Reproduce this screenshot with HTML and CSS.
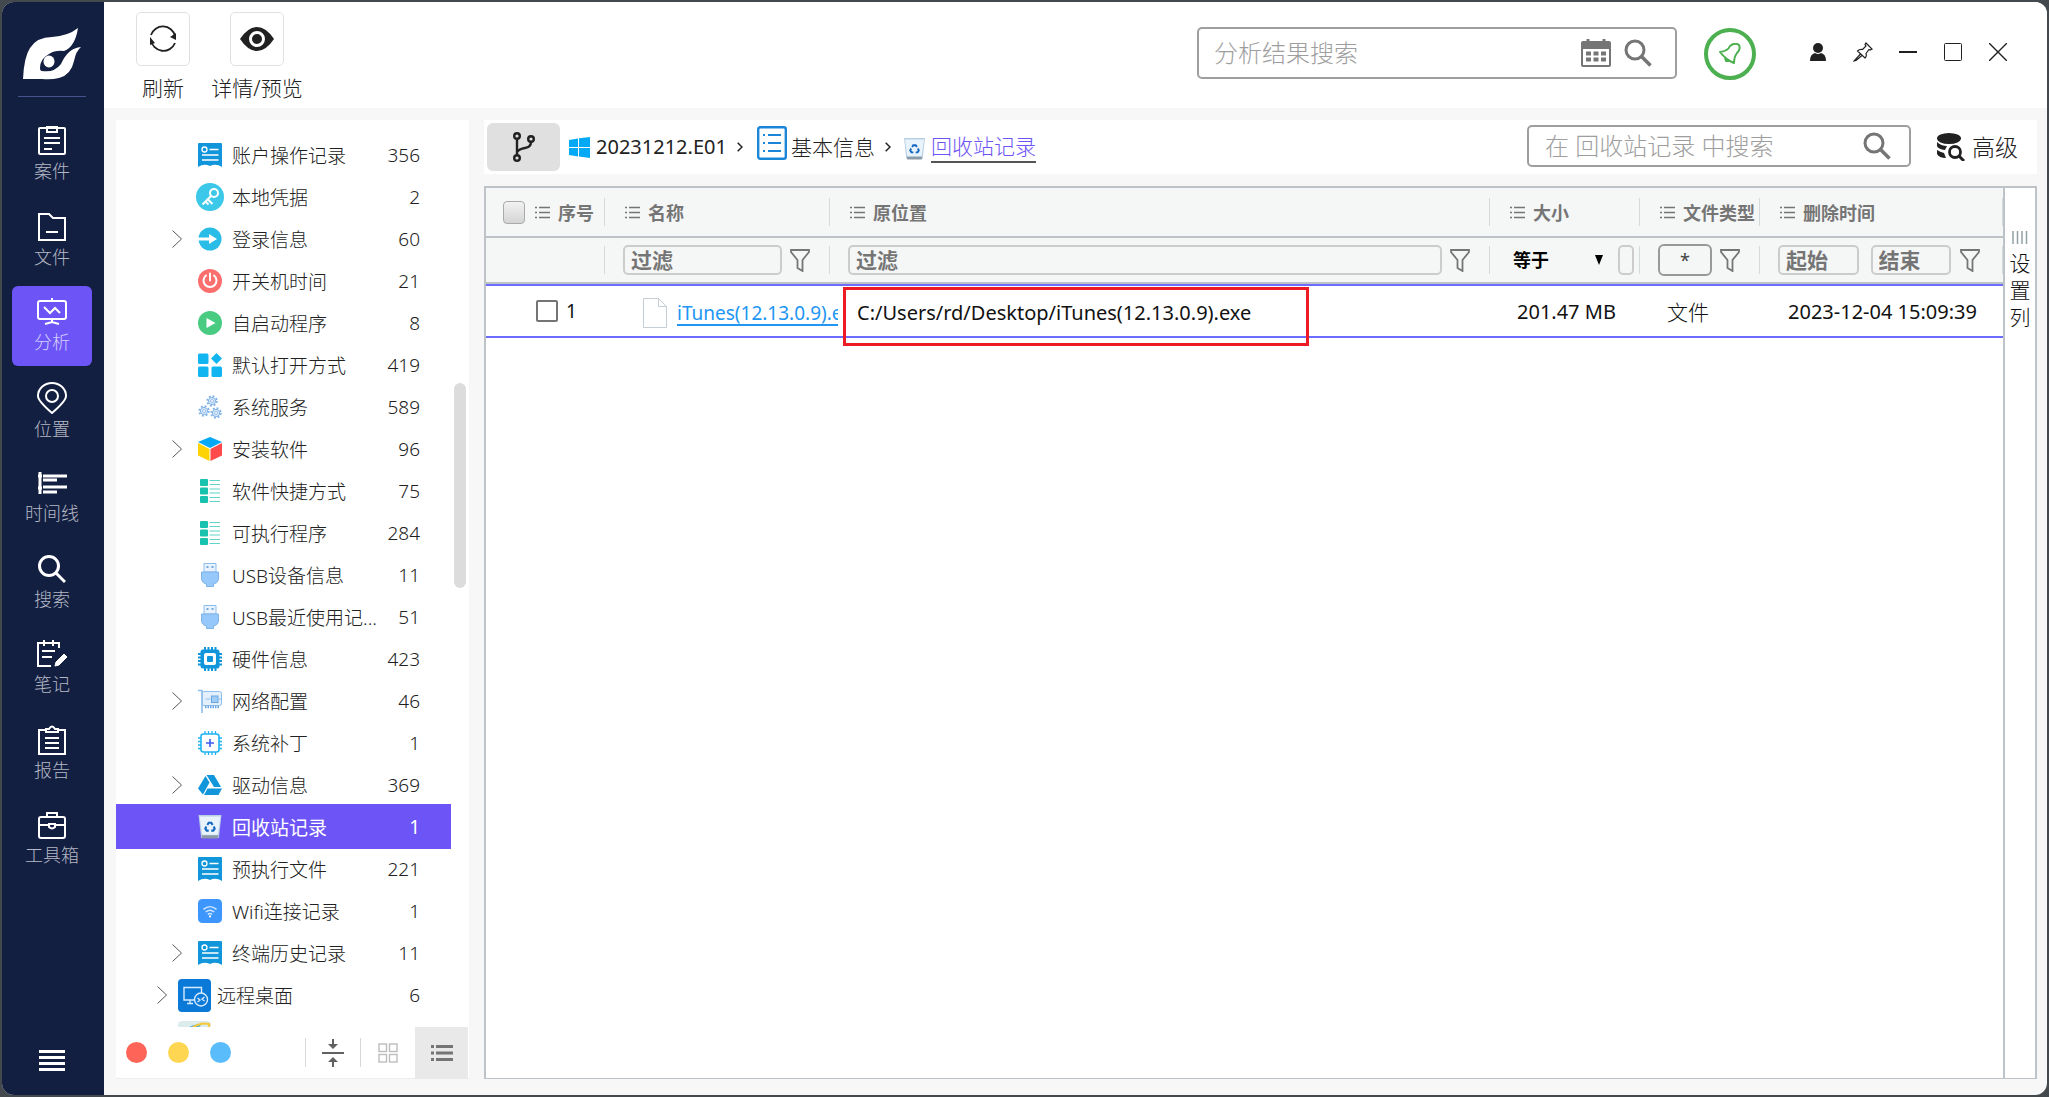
FILE: index.html
```html
<!DOCTYPE html>
<html lang="zh-CN">
<head>
<meta charset="utf-8">
<title>分析 - 回收站记录</title>
<link rel="stylesheet" href="styles.css">
</head>
<body>
<svg class="sprite" aria-hidden="true">
  <symbol id="doc" viewBox="0 0 24 24"><path fill="#1296db" d="M0 1q0-1 1-1h22q1 0 1 1v23q-6-4-12-1q-6-3-12 1z"/><circle cx="6.500" cy="6.500" r="2.500" fill="none" stroke="#fff" stroke-width="1.300"/><path stroke="#fff" stroke-width="1.300" d="M11.500 6.500h9M4 12h16.500M4 17h16.500" fill="none"/></symbol>
  <symbol id="key" viewBox="0 0 28 28"><circle cx="14" cy="14" r="14" fill="#3cc8e8"/><g fill="none" stroke="#fff" stroke-width="2"><circle cx="18" cy="10" r="4"/><path d="M15 13l-8.500 8.500M12 16.500l4.500 4.500M9.500 18.500l3 3"/></g></symbol>
  <symbol id="login" viewBox="0 0 24 24"><circle cx="12" cy="12" r="11.500" fill="#28bce6"/><path d="M0 10.500h11V7l8 5-8 5v-3.500H0z" fill="#fff"/></symbol>
  <symbol id="power" viewBox="0 0 24 24"><circle cx="12" cy="12" r="12" fill="#fa6e6e"/><path d="M12 4.500v7M8 6.500a6.500 6.500 0 1 0 8 0" fill="none" stroke="#fff" stroke-width="2" stroke-linecap="round"/></symbol>
  <symbol id="play" viewBox="0 0 24 24"><circle cx="12" cy="12" r="12" fill="#4acb82"/><path d="M8.500 7v10l9-5z" fill="#fff"/></symbol>
  <symbol id="apps" viewBox="0 0 24 24"><g fill="#13b5f1"><rect y=".5" width="10.500" height="10.500" rx="1.500"/><rect y="13.500" width="10.500" height="10.500" rx="1.500"/><rect x="13.500" y="13.500" width="10.500" height="10.500" rx="1.500"/><path d="M18.500 0l5.500 5.500-5.500 5.500-5.500-5.500z"/></g></symbol>
  <symbol id="gear" viewBox="-6 -6 12 12"><circle r="4.800" fill="none" stroke="#7fb2e8" stroke-width="1.800" stroke-dasharray="1.885 1.885"/><circle r="3.600" fill="#dcebfb" stroke="#7fb2e8"/><circle r="1.500" fill="#fff" stroke="#7fb2e8" stroke-width=".8"/></symbol>
  <symbol id="gears" viewBox="0 0 24 24"><use href="#gear" x="8" y="0" width="12" height="12"/><use href="#gear" x="0" y="10" width="12" height="12"/><use href="#gear" x="12" y="12" width="12" height="12"/></symbol>
  <symbol id="cube" viewBox="0 0 24 24"><path fill="#03a9f4" d="M12 0l12 5-12 6L0 5z"/><path fill="#fdd306" d="M0 6l11.500 6v12L0 18.500z"/><path fill="#ff4b4b" d="M24 6l-11.500 6v12L24 18.500z"/></symbol>
  <symbol id="rows" viewBox="0 0 20 24"><g fill="#17c3ae"><rect width="8" height="7" rx="1"/><rect y="8.500" width="8" height="7" rx="1"/><rect y="17" width="8" height="7" rx="1"/></g><path stroke="#5fd6c8" stroke-width="1.200" d="M9.500 1.500H20M9.500 5.500H20M9.500 10H20M9.500 14H20M9.500 18.500H20M9.500 22.500H20"/></symbol>
  <symbol id="usb" viewBox="0 0 18 24"><path d="M3 .5h12V9H3z" fill="#e8f3ff" stroke="#8dbdec"/><path d="M5.500 4h2M10.500 4h2" stroke="#4a90d9" stroke-width="1.500"/><path d="M.5 9h17v6q0 5-5 6v2.500h-7V21q-5-1-5-6z" fill="#97c8fb" stroke="#7fb2e8"/></symbol>
  <symbol id="chip" viewBox="0 0 24 24"><path stroke="#1296db" stroke-width="2" d="M7 0v24M10.500 0v24M14 0v24M17.500 0v24M0 7h24M0 10.500h24M0 14h24M0 17.500h24"/><rect x="2.500" y="2.500" width="19" height="19" rx="2.500" fill="#1296db"/><rect x="6" y="6" width="12" height="12" rx="2" fill="#fff"/><rect x="9" y="9" width="6" height="6" rx="1" fill="#1296db"/></symbol>
  <symbol id="nic" viewBox="0 0 24 24"><rect x="4" y="2.500" width="19.500" height="14" rx="2" fill="#e3f0fc" stroke="#8dbdec"/><path d="M0 1.500h4V24" fill="none" stroke="#8dbdec" stroke-width="1.600"/><rect x="13.500" y="7" width="6.500" height="6.500" fill="#9fcdf8" stroke="#6aa6e0"/><path d="M7.500 10h5M21 10h2" stroke="#8dbdec"/><path d="M7 18h14" stroke="#6aa6e0" stroke-width="2.500" stroke-dasharray="1.500 1"/></symbol>
  <symbol id="patch" viewBox="0 0 24 24"><path stroke="#1fb3f2" stroke-width="1.300" d="M7 0v24M10.500 0v24M14 0v24M17.500 0v24M0 7h24M0 10.500h24M0 14h24M0 17.500h24"/><rect x="3" y="3" width="18" height="18" rx="2.500" fill="#fff" stroke="#1fb3f2" stroke-width="1.600"/><path d="M12 8v8M8 12h8" stroke="#3a5cf0" stroke-width="1.600"/></symbol>
  <symbol id="drive" viewBox="0 0 24 24"><g fill="#1296db"><path d="M8.500 2h7.500l7 12h-7z"/><path d="M7.500 3l4 6.500L5 21.500l-5-6z"/><path d="M9.500 15.500H24l-3.500 6.500H6z"/></g></symbol>
  <symbol id="bin" viewBox="0 0 22 23"><path d="M0 0h22l-2.500 22h-17z" fill="#b9cfe2"/><path d="M1 1.500h20L18.500 19h-15z" fill="#e9f3fb"/><path d="M3 19.500h16l-.5 3h-15z" fill="#8b9aa6"/><g fill="none" stroke="#1568c0" stroke-width="2"><path d="M8.500 9.500l1.200-2h2.600l1.200 2M14.500 11l1 2-1.300 2h-2M7.500 11l-1 2 1.300 2h2"/></g></symbol>
  <symbol id="wifi" viewBox="0 0 22 22"><rect width="22" height="22" rx="4" fill="#3c96fc"/><g fill="none" stroke="#cfe6ff" stroke-width="1.300"><path d="M5 9.500q6-5 12 0M7 12q4-3.500 8 0M9 14.200q2-1.700 4 0"/></g><circle cx="11" cy="16" r="1" fill="#fff"/></symbol>
  <symbol id="rdp" viewBox="0 0 33 33"><rect width="33" height="33" rx="4" fill="#0b79d8"/><g fill="none" stroke="#d8ecff" stroke-width="1.400"><path d="M17 21H6V8.500h17.500V14M12 21v3.500M9 24.500h6"/><circle cx="23" cy="20.500" r="6.500" fill="#0b79d8"/><path d="M19.500 19l2.500 2-2.500 2M26.500 18l-2.500 2 2.500 2"/></g></symbol>
  <symbol id="ie" viewBox="0 0 33 33"><rect width="33" height="33" rx="4" fill="#dcebec"/><path d="M10 7q6-5 13-3l-3 3q-5-1-9 2z" fill="#45aee8"/><path d="M14 7q8-6 17-4q1 1-1 4" fill="none" stroke="#f8c838" stroke-width="2"/></symbol>
  <symbol id="chev" viewBox="0 0 10 18"><path d="M.5.500l9 8.500-9 8.500" fill="none" stroke="#555"/></symbol>
  <symbol id="list" viewBox="0 0 15 13"><path d="M0 1.500h2M0 6.500h2M0 11.500h2M4 1.500h11M4 6.500h11M4 11.500h11" stroke="#757575" stroke-width="1.500"/></symbol>
  <symbol id="funnel" viewBox="0 0 20 23"><path d="M1 1h18v2l-6.500 8v11l-5-3v-8L1 3z" fill="none" stroke="#757575" stroke-width="1.800"/></symbol>
  <symbol id="mag" viewBox="0 0 28 28"><circle cx="11" cy="11" r="9" fill="none" stroke="#757575" stroke-width="3"/><path d="M17.500 17.500l9 9" stroke="#757575" stroke-width="3.500"/></symbol>
</svg>
<div class="window">
  <nav class="side">
    <svg class="logo" viewBox="0 0 58 52"><path fill="#fff" d="M55 0q-3 19-14 23q-9-1-15 3q-9 5-9 14q0 3 2 3q12 2 19-7Q45 20 58 19q-5 4-7 14q-3 14-15 17q-8 2-17 1H0q1-22 7-31Q14 9 29 9Q45 8 55 0z"/><ellipse cx="26" cy="33.500" rx="5.500" ry="6" fill="#fff"/></svg>
    <div class="line"></div>
    <div class="menu">
      <button class="item"><svg width="28" height="30" viewBox="0 0 28 30"><rect x="1" y="2" width="26" height="26" rx="1"/><path d="M9 1v5h10V1zM6 12h16M6 17h16M6 23h8"/></svg>案件</button>
      <button class="item"><svg width="28" height="30" viewBox="0 0 28 30"><path d="M1 2h10l4 4h12v22H1zM8 20h12"/></svg>文件</button>
      <button class="item on"><svg width="30" height="30" viewBox="0 0 30 30"><rect x="1" y="4" width="28" height="18" rx="2"/><path d="M15 1v3M15 22v4M8 27l7-2 7 2M7 10l6 6 5-5 5 5"/></svg>分析</button>
      <button class="item"><svg width="30" height="32" viewBox="0 0 30 32"><path d="M15 31Q1 19 1 14a14 13 0 0 1 28 0q0 5-14 17z"/><circle cx="15" cy="14" r="6"/></svg>位置</button>
      <button class="item"><svg class="fat" width="30" height="30" viewBox="0 0 30 30"><path d="M3 4v22M1 8h4M1 20h4M6 8h24M6 12h14M6 19h24M6 24h14"/></svg>时间线</button>
      <button class="item"><svg class="fat" width="28" height="30" viewBox="0 0 28 30"><circle cx="11" cy="12" r="9.500"/><path d="M18 19l9 9"/></svg>搜索</button>
      <button class="item"><svg width="30" height="30" viewBox="0 0 30 30"><path d="M22 9V4H1v23h13M7 1v6M16 1v6M5 12h13M5 18h10"/><path d="M18 27l1-4 8-8 3 3-8 8z" fill="#fff" stroke-width="1"/></svg>笔记</button>
      <button class="item"><svg width="28" height="30" viewBox="0 0 28 30"><path d="M7 5H1v24h26V5h-6M8 7V4h3q3-5 6 0h3v3zM7 13h14M7 18h14M7 23h14"/></svg>报告</button>
      <button class="item"><svg width="28" height="30" viewBox="0 0 28 30"><rect x="1" y="7" width="26" height="21" rx="2"/><path d="M9 7V3h10v4M1 15h10M17 15h10M11 14v3q3 3 6 0v-3z"/></svg>工具箱</button>
    </div>
    <button class="burger" aria-label="菜单"><svg width="26" height="21" viewBox="0 0 26 21"><path d="M0 1.500h26M0 7.500h26M0 13.500h26M0 19.500h26" stroke="#fff" stroke-width="3"/></svg></button>
  </nav>

  <div class="main">
    <header class="top">
      <div class="tools">
        <button class="tool"><span class="box"><svg width="28" height="28" viewBox="0 0 28 28"><g fill="none" stroke="#212121" stroke-width="1.800"><path d="M2 10A12.500 12.500 0 0 1 26 11M26 18A12.500 12.500 0 0 1 2 15"/></g><path d="M27 8v7l-6-3zM1 12l5 6-5 2z" fill="#212121"/></svg></span>刷新</button>
        <button class="tool"><span class="box"><svg width="34" height="24" viewBox="0 0 34 24"><path d="M0 12Q8 0 17 0t17 12Q26 24 17 24T0 12z" fill="#212121"/><circle cx="17" cy="12" r="6.500" fill="#212121" stroke="#fff" stroke-width="3"/></svg></span>详情/预览</button>
      </div>
      <label class="find find-all"><input type="text" placeholder="分析结果搜索" aria-label="分析结果搜索">
        <svg width="30" height="28" viewBox="0 0 30 28"><path d="M2 2h26q2 0 2 2v22q0 2-2 2H2q-2 0-2-2V4q0-2 2-2zm0 8v16h26V10z" fill="#757575" fill-rule="evenodd"/><path d="M7 0v3M23 0v3" stroke="#757575" stroke-width="3"/><path d="M5 14.500h20M5 20.500h20" stroke="#757575" stroke-width="4" stroke-dasharray="5 2.500"/></svg>
        <svg width="28" height="28"><use href="#mag"/></svg></label>
      <button class="bell" aria-label="通知"><svg width="22" height="22" viewBox="0 0 22 22"><path d="M1 9q8-1 10-6q5-4 9-1q2 4-2 8q-3 4-3 10q-5-2-7-4q-4-3-7-7zM6 15l1 3 3 0" fill="none" stroke="#4caf50" stroke-width="2" stroke-linejoin="round"/></svg></button>
      <div class="winbtns">
        <button aria-label="用户"><svg width="18" height="18" viewBox="0 0 18 18"><circle cx="9" cy="5" r="5" fill="#212121"/><path d="M1 18q0-7 5-8q3 2 6 0q5 1 5 8z" fill="#212121"/></svg></button>
        <button aria-label="固定"><svg width="20" height="20" viewBox="0 0 20 20"><path d="M13 1l6 6-2 1-1-.5-3 4q1 3-1 4.500L4.500 9q2-2 5-1.500L13 4l-1-1.500zM7.500 12L1 19l2-.5 6-5" fill="none" stroke="#212121" stroke-width="1.200"/></svg></button>
        <button aria-label="最小化"><svg width="18" height="18" viewBox="0 0 18 18"><path d="M0 9h18" stroke="#212121" stroke-width="2"/></svg></button>
        <button aria-label="最大化"><svg width="18" height="18" viewBox="0 0 18 18"><rect x=".5" y=".5" width="17" height="17" rx="1" fill="none" stroke="#212121"/></svg></button>
        <button aria-label="关闭"><svg width="18" height="18" viewBox="0 0 18 18"><path d="M0 0l18 18M18 0L0 18" stroke="#212121" stroke-width="1.400"/></svg></button>
      </div>
    </header>

    <div class="work">
      <aside class="panel">
        <ul class="tree">
          <li><i></i><svg><use href="#doc"/></svg><span>账户操作记录</span><b>356</b></li>
          <li><i></i><svg class="big"><use href="#key"/></svg><span>本地凭据</span><b>2</b></li>
          <li><i><svg><use href="#chev"/></svg></i><svg><use href="#login"/></svg><span>登录信息</span><b>60</b></li>
          <li><i></i><svg><use href="#power"/></svg><span>开关机时间</span><b>21</b></li>
          <li><i></i><svg><use href="#play"/></svg><span>自启动程序</span><b>8</b></li>
          <li><i></i><svg><use href="#apps"/></svg><span>默认打开方式</span><b>419</b></li>
          <li><i></i><svg><use href="#gears"/></svg><span>系统服务</span><b>589</b></li>
          <li><i><svg><use href="#chev"/></svg></i><svg><use href="#cube"/></svg><span>安装软件</span><b>96</b></li>
          <li><i></i><svg><use href="#rows"/></svg><span>软件快捷方式</span><b>75</b></li>
          <li><i></i><svg><use href="#rows"/></svg><span>可执行程序</span><b>284</b></li>
          <li><i></i><svg><use href="#usb"/></svg><span>USB设备信息</span><b>11</b></li>
          <li><i></i><svg><use href="#usb"/></svg><span>USB最近使用记...</span><b>51</b></li>
          <li><i></i><svg><use href="#chip"/></svg><span>硬件信息</span><b>423</b></li>
          <li><i><svg><use href="#chev"/></svg></i><svg><use href="#nic"/></svg><span>网络配置</span><b>46</b></li>
          <li><i></i><svg><use href="#patch"/></svg><span>系统补丁</span><b>1</b></li>
          <li><i><svg><use href="#chev"/></svg></i><svg><use href="#drive"/></svg><span>驱动信息</span><b>369</b></li>
          <li class="sel"><i></i><svg><use href="#bin"/></svg><span>回收站记录</span><b>1</b></li>
          <li><i></i><svg><use href="#doc"/></svg><span>预执行文件</span><b>221</b></li>
          <li><i></i><svg><use href="#wifi"/></svg><span>Wifi连接记录</span><b>1</b></li>
          <li><i><svg><use href="#chev"/></svg></i><svg><use href="#doc"/></svg><span>终端历史记录</span><b>11</b></li>
          <li class="app"><i><svg><use href="#chev"/></svg></i><svg><use href="#rdp"/></svg><span>远程桌面</span><b>6</b></li>
          <li class="app"><i></i><svg><use href="#ie"/></svg></li>
        </ul>
        <div class="thumb"></div>
        <footer class="foot">
          <span class="dot red"></span><span class="dot yellow"></span><span class="dot blue"></span>
          <button class="fold" aria-label="折叠"><svg width="22" height="28" viewBox="0 0 22 28"><path d="M0 14h22" stroke="#616161" stroke-width="2"/><path d="M11 0v7M11 28v-7" stroke="#616161" stroke-width="2"/><path d="M6 5h10l-5 5zM6 23h10l-5-5z" fill="#616161"/></svg></button>
          <button class="tiles" aria-label="网格"><svg width="20" height="20" viewBox="0 0 20 20"><g fill="none" stroke="#bdbdbd" stroke-width="1.400"><rect x="1" y="1" width="7.500" height="7.500"/><rect x="11.500" y="1" width="7.500" height="7.500"/><rect x="1" y="11.500" width="7.500" height="7.500"/><rect x="11.500" y="11.500" width="7.500" height="7.500"/></g></svg></button>
          <button class="lines" aria-label="列表"><svg width="22" height="18" viewBox="0 0 22 18"><path d="M0 2.500h3M0 9h3M0 15.500h3M5 2.500h17M5 9h17M5 15.500h17" stroke="#757575" stroke-width="3"/></svg></button>
        </footer>
      </aside>

      <section class="view">
        <div class="bar">
          <button class="branch" aria-label="分支"><svg width="22" height="30" viewBox="0 0 22 30"><g fill="none" stroke="#212121" stroke-width="2.400"><circle cx="4" cy="4" r="2.800"/><circle cx="4" cy="26" r="2.800"/><circle cx="18" cy="7" r="2.800"/><path d="M4 7v16M18 10q0 5-6 6t-8 4"/></g></svg></button>
          <div class="crumbs">
            <svg width="21" height="21" viewBox="0 0 21 21"><path fill="#03a9f4" d="M0 3l9-1.500V10H0zM10 1.300L21 0v10H10zM0 11h9v8.500L0 18zM10 11h11v10l-11-1.500z"/></svg>
            <a href="#" class="num">20231212.E01</a>
            <svg class="sep" width="6" height="10" viewBox="0 0 6 10"><path d="M.7.700L5 5 .7 9.300" fill="none" stroke="#212121" stroke-width="1.500"/></svg>
            <svg class="info" width="30" height="34" viewBox="0 0 30 34"><rect x="1.200" y="1.200" width="27.600" height="31.600" rx="2" fill="#fff" stroke="#1a86d8" stroke-width="2.400"/><path d="M6 9h2M6 17h2M6 25h2M11 9h13M11 17h13M11 25h13" stroke="#1a86d8" stroke-width="2"/></svg>
            <a href="#">基本信息</a>
            <svg class="sep" width="6" height="10" viewBox="0 0 6 10"><path d="M.7.700L5 5 .7 9.300" fill="none" stroke="#212121" stroke-width="1.500"/></svg>
            <svg class="can" width="21" height="22"><use href="#bin"/></svg>
            <a href="#" class="now">回收站记录</a>
          </div>
          <label class="find find-here"><input type="text" placeholder="在 回收站记录 中搜索" aria-label="在 回收站记录 中搜索"><svg width="28" height="28"><use href="#mag"/></svg></label>
          <button class="adv"><svg width="28" height="28" viewBox="0 0 28 28"><g fill="#212121"><ellipse cx="12" cy="5.500" rx="12" ry="5.500"/><path d="M0 9q4 4 10 4l-2 4Q1 16 0 13zM0 17q3 2 7 3l2 5Q2 25 0 21z"/></g><circle cx="18" cy="19" r="5.500" fill="#fff" stroke="#212121" stroke-width="2.800"/><path d="M22 23l5 5" stroke="#212121" stroke-width="3"/></svg>高级</button>
        </div>

        <div class="grid">
          <div class="scroll">
            <table>
              <colgroup><col class="c-no"><col class="c-name"><col><col class="c-size"><col class="c-type"><col class="c-time"></colgroup>
              <thead>
                <tr class="heads">
                  <th><div class="h"><input class="all" type="checkbox" aria-label="全选"><svg><use href="#list"/></svg>序号</div></th>
                  <th><div class="h"><svg><use href="#list"/></svg>名称</div></th>
                  <th><div class="h"><svg><use href="#list"/></svg>原位置</div></th>
                  <th><div class="h"><svg><use href="#list"/></svg>大小</div></th>
                  <th><div class="h"><svg><use href="#list"/></svg>文件类型</div></th>
                  <th><div class="h"><svg><use href="#list"/></svg>删除时间</div></th>
                </tr>
                <tr class="filters">
                  <td><div class="h"></div></td>
                  <td><div class="h"><input type="text" placeholder="过滤" aria-label="过滤名称"><svg><use href="#funnel"/></svg></div></td>
                  <td><div class="h"><input type="text" placeholder="过滤" aria-label="过滤原位置"><svg><use href="#funnel"/></svg></div></td>
                  <td><div class="h cmp"><select aria-label="大小比较"><option>等于</option></select><input type="text" aria-label="大小"></div></td>
                  <td><div class="h"><button class="star">*</button><svg><use href="#funnel"/></svg></div></td>
                  <td><div class="h time"><input type="text" placeholder="起始" aria-label="起始时间"><input class="end" type="text" placeholder="结束" aria-label="结束时间"><svg><use href="#funnel"/></svg></div></td>
                </tr>
              </thead>
              <tbody>
                <tr>
                  <td><label class="pick"><input type="checkbox">1</label></td>
                  <td><div class="file"><svg width="24" height="30" viewBox="0 0 24 30"><path d="M.5.500h15l8 8v21H.5zM15.500.500v8h8" fill="#fff" stroke="#c5cdd3"/></svg><a href="#">iTunes(12.13.0.9).exe</a></div></td>
                  <td class="path"><div class="mark">C:/Users/rd/Desktop/iTunes(12.13.0.9).exe</div></td>
                  <td class="size">201.47 MB</td>
                  <td class="type">文件</td>
                  <td class="date">2023-12-04 15:09:39</td>
                </tr>
              </tbody>
            </table>
          </div>
          <button class="cols"><svg width="16" height="13" viewBox="0 0 16 13"><path d="M1 0v13M5.500 0v13M10 0v13M14.500 0v13" stroke="#90a0a5" stroke-width="1.500"/></svg><span>设置列</span></button>
        </div>
      </section>
    </div>
  </div>
</div>
</body>
</html>
```
FILE: styles.css
```css
* { box-sizing: border-box; }
body {
  margin: 0;
  height: 100vh;
  padding: 2px;
  background: #43494c;
  color: #212121;
  font-family: "Noto Sans", "Noto Sans CJK SC", sans-serif;
  font-size: 19px;
  font-weight: 300;
}
button, input, select { font: inherit; color: inherit; margin: 0; }
button { border: 0; background: none; padding: 0; }
a { color: inherit; text-decoration: none; }
svg { flex: none; display: block; }
.sprite { position: absolute; width: 0; height: 0; }

.window { display: flex; height: 100%; border-radius: 12px; overflow: hidden; background: #f7f7f7; }

/* left navigation */
.side { width: 102px; flex: none; padding-right: 2px; background: #131f41; display: flex; flex-direction: column; align-items: center; }
.logo { width: 58px; height: 52px; margin-top: 26px; }
.line { width: 68px; height: 1px; background: #46528c; margin-top: 16px; }
.menu { display: flex; flex-direction: column; justify-content: space-between; height: 764px; margin-top: 18px; }
.item {
  width: 80px; height: 80px; border-radius: 6px;
  display: flex; flex-direction: column; align-items: center; justify-content: center; gap: 2px;
  color: #b4b8c4; font-size: 18px; line-height: 26px;
}
.item svg { fill: none; stroke: #fff; stroke-width: 2; }
.item svg.fat { stroke-width: 3; }
.item.on { background: #6c54f6; color: #d4cefc; }
.burger { margin-top: auto; margin-bottom: 24px; }

/* header */
.main { flex: 1; min-width: 0; display: flex; flex-direction: column; }
.top { height: 106px; flex: none; background: #fff; display: flex; padding: 10px 40px 0 12px; }
.tools { display: flex; flex: 1; }
.tool { width: 94px; height: 92px; display: flex; flex-direction: column; align-items: center; gap: 6px; font-size: 21px; line-height: 32px; }
.box { width: 54px; height: 54px; border: 1px solid #e0e0e0; border-radius: 5px; display: grid; place-items: center; }
.find { display: flex; align-items: center; border: 2px solid #9e9e9e; border-radius: 5px; background: #fff; }
.find input { flex: 1; min-width: 0; border: 0; outline: 0; background: none; padding: 0; font-size: 24px; line-height: 32px; }
::placeholder { color: #9e9e9e; opacity: 1; }
.find-all { width: 480px; height: 52px; margin-top: 15px; padding: 0 23px 0 15px; gap: 13px; }
.bell { width: 52px; height: 52px; margin: 16px 52px 0 27px; border: 4px solid #4caf50; border-radius: 50%; display: grid; place-items: center; }
.winbtns { display: flex; gap: 26px; height: 80px; align-items: center; }
.winbtns button { width: 19px; display: grid; place-items: center; }

/* work area */
.work { flex: 1; min-height: 0; display: flex; gap: 15px; padding: 12px 10px 16px 12px; }
.panel { width: 353px; flex: none; background: #fff; display: flex; flex-direction: column; position: relative; }
.tree { list-style: none; margin: 0; padding: 14px 18px 0 0; flex: 1; min-height: 0; overflow: hidden; }
.tree li { height: 42px; display: flex; align-items: center; padding: 0 31px 0 51px; white-space: nowrap; }
.tree i { width: 20px; display: grid; place-items: center; }
.tree i svg { width: 10px; height: 18px; margin: 0; }
.tree svg { width: 24px; height: 24px; margin: 0 10px 0 11px; }
.tree svg.big { width: 28px; height: 28px; margin: 0 8px 0 9px; }
.tree span { flex: 1; }
.tree b { font-weight: 300; }
.tree .app { padding-left: 36px; }
.tree .app > svg { width: 33px; height: 33px; margin: 0 6px; }
.tree .sel { background: #6c54f6; box-shadow: 0 -2px #6c54f6, 0 1px #6c54f6; color: #fff; font-weight: 400; }
.tree .sel b { font-weight: 400; }
.thumb { position: absolute; right: 3px; top: 263px; width: 12px; height: 205px; border-radius: 6px; background: #dcdcdc; }
.foot { height: 52px; flex: none; display: flex; align-items: center; padding-left: 10px; border-bottom: 1px solid #ededed; }
.dot { width: 21px; height: 21px; border-radius: 50%; margin-right: 21px; }
.red { background: #ff6459; }
.yellow { background: #ffd652; }
.blue { background: #5abcfa; }
.fold { height: 29px; width: 56px; margin-left: auto; border: solid #d8d8d8; border-width: 0 1px; display: grid; place-items: center; }
.tiles { width: 54px; display: grid; place-items: center; }
.lines { width: 53px; height: 52px; margin-right: 1px; background: #e9e9e9; display: grid; place-items: center; }

/* breadcrumb bar */
.view { flex: 1; min-width: 0; display: flex; flex-direction: column; gap: 12px; }
.bar { height: 54px; flex: none; background: #fff; display: flex; align-items: center; padding: 0 19px 0 3px; }
.branch { width: 73px; height: 48px; border-radius: 6px; background: #e0e0e0; display: grid; place-items: center; }
.crumbs { flex: 1; display: flex; align-items: center; margin-left: 9px; font-size: 21px; line-height: 30px; }
.crumbs .num { margin-left: 6px; font-size: 20px; font-weight: 400; }
.sep { margin: 0 10px; }
.info { margin: 0 4px 8px 4px; }
.can { margin: 4px 6px 0 3px; }
.now { color: #6c54f6; border-bottom: 2px solid #555; }
.find-here { width: 384px; height: 42px; padding: 0 18px 0 16px; margin-bottom: 2px; }
.adv { display: flex; align-items: center; gap: 7px; margin-left: 26px; font-size: 23px; line-height: 32px; }
.crumbs .num, .path, .size, .date { font-size: 20px; }

/* records table */
.grid { flex: 1; min-height: 0; display: flex; border: 2px solid #bdc3c7; border-bottom-width: 1px; background: #fff; }
.scroll { flex: 1; min-width: 0; }
table { width: 100%; table-layout: fixed; border-collapse: separate; border-spacing: 0; }
td, th { padding: 0; text-align: left; }
.c-no { width: 119px; }
.c-name { width: 225px; }
.c-size { width: 150px; }
.c-type { width: 120px; }
.c-time { width: 243px; }
thead th, thead td { background: #f5f7f7; border-bottom: 2px solid #bdc3c7; }
.heads th { height: 50px; }
.filters td { height: 46px; }
.h { height: 28px; display: flex; align-items: center; padding-left: 20px; border-right: 1px solid #d5dadc; color: #757575; font-size: 18px; font-weight: 700; white-space: nowrap; }
.h svg { width: 15px; height: 13px; margin-right: 8px; }
.all { appearance: none; width: 22px; height: 23px; margin-right: 10px; border: 1px solid #aaa; border-radius: 4px; background: linear-gradient(#f2f2f2, #d4d4d4); }
.heads th:first-child .h { padding-left: 17px; }
.filters .h { padding-left: 18px; }
.filters svg { width: 20px; height: 23px; margin: 0 19px 0 8px; }
.filters input { flex: 1; min-width: 0; height: 30px; border: 2px solid #ccc; border-radius: 5px; background: #f5f7f7; padding: 0 6px; font-size: 21px; font-weight: 700; }
.filters ::placeholder { color: #757575; }
.cmp select { appearance: none; width: 92px; border: 0; padding: 0; background: url("data:image/svg+xml,%3Csvg xmlns='http://www.w3.org/2000/svg' width='8' height='10'%3E%3Cpath d='M0 0h8L4 10z'/%3E%3C/svg%3E") no-repeat right center; color: #000; }
.filters .cmp { padding: 0 5px 0 23px; gap: 15px; }
.star { width: 54px; height: 32px; flex: none; border: 2px solid #999; border-radius: 6px; color: #424242; font-weight: 400; }
.filters .time { gap: 12px; }
.filters .time svg { margin: 0 22px 0 -3px; }
tbody td { height: 54px; border-top: 2px solid #6c6cff; border-bottom: 2px solid #6c6cff; white-space: nowrap; color: #111; font-weight: 400; }
.pick { display: flex; align-items: center; gap: 8px; padding-left: 50px; }
.pick input { appearance: none; width: 22px; height: 22px; border: 2px solid #757575; border-radius: 2px; }
.file { display: flex; align-items: center; gap: 10px; margin: 4px -8px 0 38px; overflow: hidden; color: #2196f3; }
.file a { text-decoration: underline; text-decoration-thickness: 2px; text-underline-offset: 4px; }
.path { position: relative; }
.mark { position: absolute; left: 13px; top: 1px; width: 466px; height: 59px; border: 3px solid #ed1c24; padding: 7px 11px; line-height: 32px; }
.size { padding-left: 27px; }
tbody .type { padding-left: 27px; font-size: 21px; font-weight: 300; }
.date { padding-left: 28px; }
.cols { width: 32px; flex: none; border-left: 2px solid #bdc3c7; display: flex; flex-direction: column; align-items: center; padding-top: 43px; gap: 6px; color: #111; font-size: 21px; line-height: 27px; }
.cols span { width: 21px; }
```
